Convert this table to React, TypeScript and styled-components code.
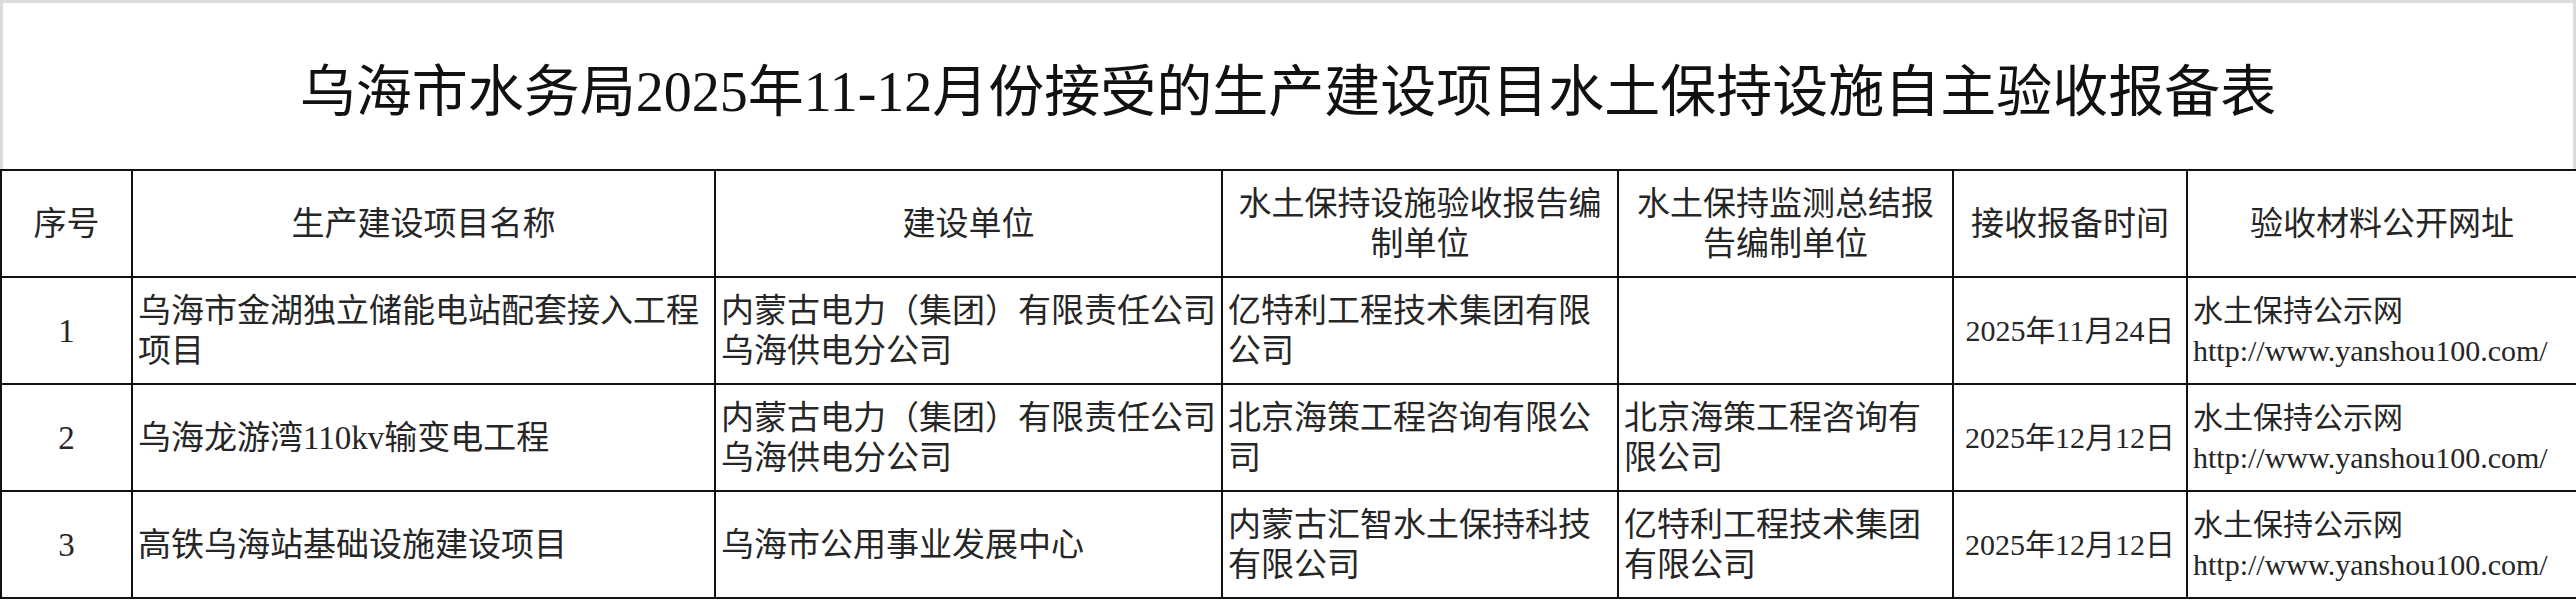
import styled, { createGlobalStyle } from "styled-components";

const GlobalStyle = createGlobalStyle`
  html, body {
    margin: 0;
    padding: 0;
    background: #ffffff;
  }
  body {
    font-family: "Liberation Serif", "Noto Sans CJK SC", serif;
    color: #262626;
  }
`;

const Page = styled.div`
  width: 2576px;
`;

const TitleBox = styled.div`
  height: 166px;
  border: 3px solid #dcdcdc;
  border-bottom: none;
  display: flex;
  align-items: center;
  justify-content: center;
`;

const Title = styled.h1`
  margin: 0;
  font-size: 56px;
  font-weight: normal;
  color: #111;
`;

const Table = styled.table`
  width: 2576px;
  border-collapse: collapse;
  table-layout: fixed;
`;

const Row = styled.tr`
  height: 107px;
`;

const Cell = styled.td<{ $align?: "left" | "center"; $small?: boolean }>`
  border: 2px solid #111;
  padding: 0 5px;
  text-align: ${(p) => p.$align ?? "left"};
  vertical-align: middle;
  font-size: ${(p) => (p.$small ? "30px" : "33px")};
  line-height: 40px;
  white-space: nowrap;
  overflow: hidden;
`;

const HeadCell = styled(Cell).attrs({ as: "th" })`
  font-weight: normal;
  text-align: center;
`;

const widths = [131, 583, 507, 396, 335, 234, 390];

const headers = [
  ["序号"],
  ["生产建设项目名称"],
  ["建设单位"],
  ["水土保持设施验收报告编", "制单位"],
  ["水土保持监测总结报", "告编制单位"],
  ["接收报备时间"],
  ["验收材料公开网址"],
];

interface Project {
  no: string;
  name: string[];
  builder: string[];
  reportUnit: string[];
  monitorUnit: string[];
  date: string;
}

const site = ["水土保持公示网", "http://www.yanshou100.com/"];

const projects: Project[] = [
  {
    no: "1",
    name: ["乌海市金湖独立储能电站配套接入工程", "项目"],
    builder: ["内蒙古电力（集团）有限责任公司", "乌海供电分公司"],
    reportUnit: ["亿特利工程技术集团有限", "公司"],
    monitorUnit: [],
    date: "2025年11月24日",
  },
  {
    no: "2",
    name: ["乌海龙游湾110kv输变电工程"],
    builder: ["内蒙古电力（集团）有限责任公司", "乌海供电分公司"],
    reportUnit: ["北京海策工程咨询有限公", "司"],
    monitorUnit: ["北京海策工程咨询有", "限公司"],
    date: "2025年12月12日",
  },
  {
    no: "3",
    name: ["高铁乌海站基础设施建设项目"],
    builder: ["乌海市公用事业发展中心"],
    reportUnit: ["内蒙古汇智水土保持科技", "有限公司"],
    monitorUnit: ["亿特利工程技术集团", "有限公司"],
    date: "2025年12月12日",
  },
];

function Lines({ lines }: { lines: string[] }) {
  return (
    <>
      {lines.map((l, i) => (
        <span key={i}>
          {i > 0 && <br />}
          {l}
        </span>
      ))}
    </>
  );
}

function App() {
  return (
    <Page>
      <GlobalStyle />
      <TitleBox>
        <Title>乌海市水务局2025年11-12月份接受的生产建设项目水土保持设施自主验收报备表</Title>
      </TitleBox>
      <Table>
        <colgroup>
          {widths.map((w, i) => (
            <col key={i} style={{ width: w }} />
          ))}
        </colgroup>
        <thead>
          <Row>
            {headers.map((h, i) => (
              <HeadCell key={i}>
                <Lines lines={h} />
              </HeadCell>
            ))}
          </Row>
        </thead>
        <tbody>
          {projects.map((p) => (
            <Row key={p.no}>
              <Cell $align="center">{p.no}</Cell>
              <Cell>
                <Lines lines={p.name} />
              </Cell>
              <Cell>
                <Lines lines={p.builder} />
              </Cell>
              <Cell>
                <Lines lines={p.reportUnit} />
              </Cell>
              <Cell>
                <Lines lines={p.monitorUnit} />
              </Cell>
              <Cell $align="center" $small>
                {p.date}
              </Cell>
              <Cell $small>
                <Lines lines={site} />
              </Cell>
            </Row>
          ))}
        </tbody>
      </Table>
    </Page>
  );
}

export default App;
